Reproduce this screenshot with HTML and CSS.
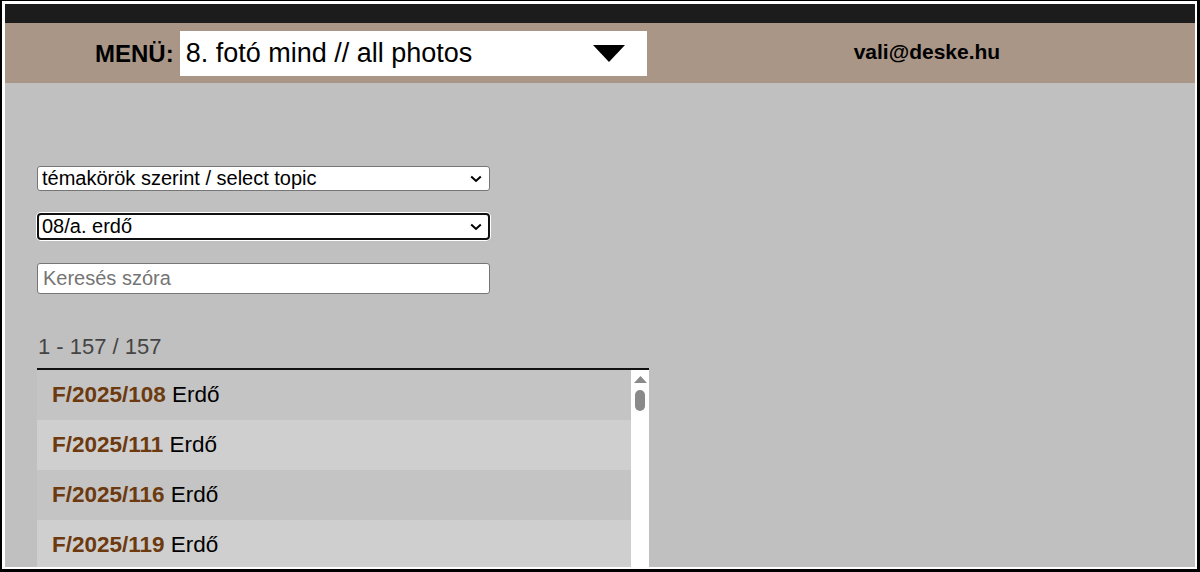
FILE: index.html
```html
<!DOCTYPE html>
<html lang="hu">
<head>
<meta charset="utf-8">
<title>Fotók</title>
<link rel="stylesheet" href="styles.css">
</head>
<body>
<div class="frame">
  <div class="inner">
    <div class="topbar"></div>
    <header class="header">
      <span class="menu-label">MENÜ:</span>
      <div class="menu-select">
        <span class="menu-value">8. fotó mind // all photos</span>
        <svg class="menu-arrow" width="32" height="17" viewBox="0 0 32 17"><polygon points="0,0 32,0 16,17" fill="#000"/></svg>
      </div>
      <span class="user">vali@deske.hu</span>
    </header>
    <main class="main">
      <div class="filters">
        <div class="sel-wrap">
          <select class="field sel">
            <option>témakörök szerint / select topic</option>
          </select>
          <svg class="chev" width="12" height="8" viewBox="0 0 12 8"><polyline points="1.2,1.5 6,6 10.8,1.5" fill="none" stroke="#000" stroke-width="2"/></svg>
        </div>
        <div class="sel-wrap">
          <select class="field sel focused">
            <option>08/a. erdő</option>
          </select>
          <svg class="chev" width="12" height="8" viewBox="0 0 12 8"><polyline points="1.2,1.5 6,6 10.8,1.5" fill="none" stroke="#000" stroke-width="2"/></svg>
        </div>
        <input class="field search" type="text" placeholder="Keresés szóra">
      </div>
      <div class="count">1 - 157 / 157</div>
      <div class="list">
        <div class="rows">
          <div class="row odd"><b class="code">F/2025/108</b> Erdő</div>
          <div class="row even"><b class="code">F/2025/111</b> Erdő</div>
          <div class="row odd"><b class="code">F/2025/116</b> Erdő</div>
          <div class="row even last"><b class="code">F/2025/119</b> Erdő</div>
        </div>
        <div class="scrollbar">
          <svg class="sb-arrow" width="13" height="7" viewBox="0 0 13 7"><polygon points="0,7 13,7 6.5,0" fill="#8a8a8a"/></svg>
          <div class="sb-thumb"></div>
        </div>
      </div>
    </main>
  </div>
</div>
</body>
</html>
```

FILE: styles.css
```css
html, body {
  margin: 0;
  padding: 0;
  height: 100%;
  overflow: hidden;
  background: #fff;
}

.frame {
  box-sizing: border-box;
  height: 572px;
  width: 1200px;
  border-style: solid;
  border-color: #000;
  border-width: 1px 3px 3px 2px;
  background: #fff;
}

.inner {
  box-sizing: border-box;
  margin: 3px 2px 2px 3px;
  height: calc(100% - 5px);
  background: #c0c0c0;
  display: flex;
  flex-direction: column;
  overflow: hidden;
  font-family: "Liberation Sans", Arial, sans-serif;
}

.topbar {
  height: 19px;
  background: #1c1c1c;
  flex: none;
}

.header {
  height: 60px;
  background: #a99687;
  display: flex;
  align-items: center;
  padding-left: 90px;
  flex: none;
}

.menu-label {
  font-weight: bold;
  font-size: 24px;
  color: #000;
  margin-right: 6px;
  margin-top: 2px;
}

.menu-select {
  box-sizing: border-box;
  width: 467px;
  height: 45px;
  background: #fff;
  display: flex;
  align-items: center;
  padding: 0 22px 0 6px;
  margin-top: 1px;
}

.menu-value {
  font-size: 27px;
  color: #000;
  flex: 1;
}

.menu-arrow {
  display: block;
}

.user {
  font-weight: bold;
  font-size: 21px;
  color: #000;
  margin-left: 207px;
  margin-top: -2px;
}

.main {
  padding: 83px 0 0 32px;
  flex: 1;
  display: flex;
  flex-direction: column;
  min-height: 0;
}

.filters {
  display: flex;
  flex-direction: column;
  gap: 22px;
  width: 453px;
}

.sel-wrap {
  position: relative;
  width: 453px;
}

.chev {
  position: absolute;
  right: 8px;
  top: 50%;
  margin-top: -4px;
  pointer-events: none;
}

.field {
  box-sizing: border-box;
  width: 453px;
  font-family: "Liberation Sans", Arial, sans-serif;
  color: #000;
  background: #fff;
  border: 1px solid #767676;
  border-radius: 3px;
  margin: 0;
  display: block;
}

.sel {
  -webkit-appearance: none;
  appearance: none;
  font-size: 20px;
  height: 25px;
  padding: 0 4px;
  line-height: 23px;
}

.sel.focused {
  height: 27px;
  border: 2px solid #101010;
  border-radius: 4px;
  box-shadow: 0 0 0 1px #fff;
  padding: 0 3px;
  outline: none;
}

.search {
  font-size: 20px;
  height: 31px;
  padding: 0 5px;
  margin-top: 1px;
}

.search::placeholder {
  color: #757575;
}

.count {
  margin-top: 41px;
  font-size: 22px;
  color: #444;
  padding-left: 1px;
  height: 33px;
  line-height: 24px;
}

.list {
  width: 612px;
  border-top: 2px solid #111;
  display: flex;
  flex: 1;
  min-height: 0;
  overflow: hidden;
}

.rows {
  flex: 1;
  display: flex;
  flex-direction: column;
}

.row {
  height: 50px;
  flex: none;
  display: flex;
  align-items: center;
  padding-left: 15px;
  font-size: 22.5px;
  color: #000;
  white-space: pre;
}

.row.last {
  flex: 1;
  height: auto;
  align-items: flex-start;
  padding-top: 12px;
}

.row.odd {
  background: #c4c4c4;
}

.row.even {
  background: #cfcfcf;
}

.code {
  color: #6c3a0e;
}

.scrollbar {
  width: 18px;
  background: #fff;
  display: flex;
  flex-direction: column;
  align-items: center;
  padding-top: 6px;
  box-sizing: border-box;
}

.sb-arrow {
  display: block;
  margin-bottom: 7px;
}

.sb-thumb {
  width: 10px;
  height: 21px;
  border-radius: 5px;
  background: #8a8a8a;
}
```
